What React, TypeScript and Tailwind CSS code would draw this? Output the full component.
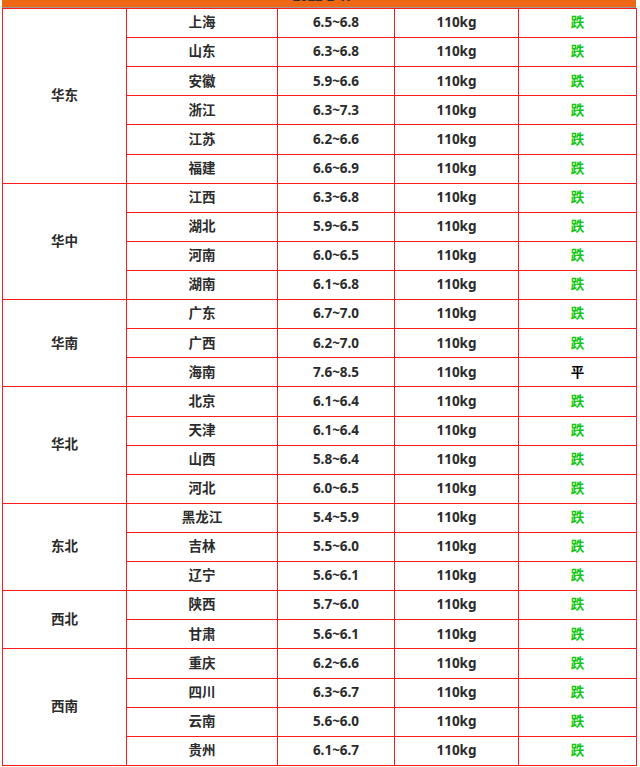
import React from "react";

type Row = { city: string; price: string; trend: string };
type Group = { region: string; rows: Row[] };

const groups: Group[] = [
  {
    region: "华东",
    rows: [
      { city: "上海", price: "6.5~6.8", trend: "跌" },
      { city: "山东", price: "6.3~6.8", trend: "跌" },
      { city: "安徽", price: "5.9~6.6", trend: "跌" },
      { city: "浙江", price: "6.3~7.3", trend: "跌" },
      { city: "江苏", price: "6.2~6.6", trend: "跌" },
      { city: "福建", price: "6.6~6.9", trend: "跌" },
    ],
  },
  {
    region: "华中",
    rows: [
      { city: "江西", price: "6.3~6.8", trend: "跌" },
      { city: "湖北", price: "5.9~6.5", trend: "跌" },
      { city: "河南", price: "6.0~6.5", trend: "跌" },
      { city: "湖南", price: "6.1~6.8", trend: "跌" },
    ],
  },
  {
    region: "华南",
    rows: [
      { city: "广东", price: "6.7~7.0", trend: "跌" },
      { city: "广西", price: "6.2~7.0", trend: "跌" },
      { city: "海南", price: "7.6~8.5", trend: "平" },
    ],
  },
  {
    region: "华北",
    rows: [
      { city: "北京", price: "6.1~6.4", trend: "跌" },
      { city: "天津", price: "6.1~6.4", trend: "跌" },
      { city: "山西", price: "5.8~6.4", trend: "跌" },
      { city: "河北", price: "6.0~6.5", trend: "跌" },
    ],
  },
  {
    region: "东北",
    rows: [
      { city: "黑龙江", price: "5.4~5.9", trend: "跌" },
      { city: "吉林", price: "5.5~6.0", trend: "跌" },
      { city: "辽宁", price: "5.6~6.1", trend: "跌" },
    ],
  },
  {
    region: "西北",
    rows: [
      { city: "陕西", price: "5.7~6.0", trend: "跌" },
      { city: "甘肃", price: "5.6~6.1", trend: "跌" },
    ],
  },
  {
    region: "西南",
    rows: [
      { city: "重庆", price: "6.2~6.6", trend: "跌" },
      { city: "四川", price: "6.3~6.7", trend: "跌" },
      { city: "云南", price: "5.6~6.0", trend: "跌" },
      { city: "贵州", price: "6.1~6.7", trend: "跌" },
    ],
  },
];

const cell = "border border-[#ff1a1a] h-[29.12px] p-0 text-center align-middle";

export default function App() {
  return (
    <div
      className="w-[640px] bg-white text-[#2b2b2b] font-bold"
      style={{ fontFamily: '"Noto Sans", "Noto Sans CJK SC", sans-serif' }}
    >
      <div className="ml-[2px] w-[634px] h-[8px] bg-[#ee6715] border-b border-[#9a9a9a] overflow-hidden flex justify-center">
        <span className="text-[13px] leading-none -mt-[10px] ml-[8px] text-[#2b2b2b]">2022-2-17</span>
      </div>
      <table className="ml-[2px] w-[634px] table-fixed border-collapse text-[13.5px] leading-none">
        <colgroup>
          <col className="w-[124px]" />
          <col className="w-[151px]" />
          <col className="w-[117px]" />
          <col className="w-[124px]" />
          <col className="w-[118px]" />
        </colgroup>
        <tbody>
          {groups.map((g) =>
            g.rows.map((r, i) => (
              <tr key={g.region + r.city}>
                {i === 0 && (
                  <td className={cell} rowSpan={g.rows.length}>
                    {g.region}
                  </td>
                )}
                <td className={cell}>{r.city}</td>
                <td className={cell}>{r.price}</td>
                <td className={cell}>110kg</td>
                <td className={cell}>
                  {r.trend === "跌" ? (
                    <span className="text-[#12c712]">跌</span>
                  ) : (
                    <span className="text-black">平</span>
                  )}
                </td>
              </tr>
            ))
          )}
        </tbody>
      </table>
    </div>
  );
}
